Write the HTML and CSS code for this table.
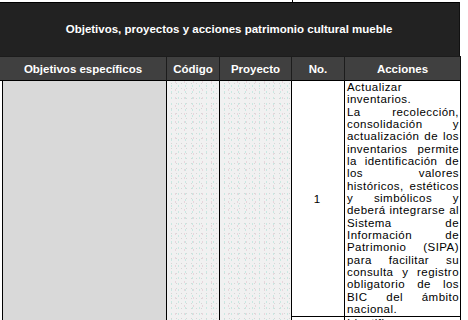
FILE: index.html
```html
<!DOCTYPE html>
<html lang="es">
<head>
<meta charset="utf-8">
<title>Objetivos, proyectos y acciones patrimonio cultural mueble</title>
<link rel="stylesheet" href="styles.css">
</head>
<body>
<div class="page">
  <div class="prev">
    <span class="prev-cell prev-a"></span>
    <span class="prev-cell prev-b"></span>
  </div>
  <div class="title">Objetivos, proyectos y acciones patrimonio cultural mueble</div>
  <div class="grid">
    <div class="th">Objetivos específicos</div>
    <div class="th">Código</div>
    <div class="th">Proyecto</div>
    <div class="th">No.</div>
    <div class="th last">Acciones</div>

    <div class="td obj"></div>
    <div class="td code dots"></div>
    <div class="td proj dots"></div>
    <div class="td num">1</div>
    <div class="td acc">
      <p>Actualizar inventarios.</p>
      <p>La recolección, consolidación y actualización de los inventarios permite la identificación de los valores históricos, estéticos y simbólicos y deberá integrarse al Sistema de Información de Patrimonio (SIPA) para facilitar su consulta y registro obligatorio de los BIC del ámbito nacional.</p>
    </div>
    <div class="td num next"></div>
    <div class="td acc next"><p>Identificar y analizar</p></div>
  </div>
</div>
</body>
</html>
```

FILE: styles.css
```css
html, body {
  margin: 0;
  padding: 0;
  background: #ffffff;
}

.page {
  width: 468px;
  height: 320px;
  overflow: hidden;
  font-family: "Liberation Sans", Arial, sans-serif;
  color: #000;
}

.prev {
  height: 2px;
  display: flex;
}

.prev-cell {
  display: block;
  height: 2px;
}

.prev-a {
  width: 292px;
  border-right: 1px solid #000;
}

.title {
  width: 460px;
  box-sizing: border-box;
  height: 54px;
  background: #222222;
  border-top: 1px solid #000;
  border-right: 1px solid #111;
  color: #ffffff;
  font-weight: bold;
  font-size: 11.5px;
  display: flex;
  align-items: center;
  justify-content: center;
  padding: 0 1px 2px 0;
}

.grid {
  display: grid;
  grid-template-columns: 167px 53px 72px 53px 116px;
  grid-template-rows: 25px 235px auto;
  width: 461px;
}

.th {
  background: #404040;
  color: #ffffff;
  font-weight: bold;
  font-size: 11.5px;
  display: flex;
  align-items: center;
  justify-content: center;
  border-top: 1px solid #1c1c1c;
  border-right: 1px solid #1c1c1c;
  border-bottom: 1px solid #000;
}

.th.last {
  border-right: 1px solid #111;
}

.td {
  border-right: 1px solid #000;
}

.obj {
  grid-row: 2 / span 2;
  margin-left: 2px;
  border-left: 1px solid #000;
  background: #d9d9d9;
}

.code, .proj {
  grid-row: 2 / span 2;
}

.dots {
  background-color: #f1f1f1;
  background-image:
    radial-gradient(circle, #c9e8e2 0.6px, transparent 0.9px),
    radial-gradient(circle, #e8d6dc 0.6px, transparent 0.9px),
    radial-gradient(circle, #d6d6d6 0.5px, transparent 0.8px);
  background-size: 7px 6px, 9px 8px, 5px 5px;
  background-position: 1px 2px, 4px 5px, 2px 0;
}

.num {
  display: flex;
  align-items: center;
  justify-content: center;
  font-size: 11.5px;
  padding-right: 2px;
}

.acc {
  font-size: 11.5px;
  line-height: 12.33px;
  letter-spacing: 0.45px;
  padding: 0 1px 0 2px;
  text-align: justify;
}

.acc p {
  margin: 0;
}

.next {
  border-top: 1px solid #000;
}
```
